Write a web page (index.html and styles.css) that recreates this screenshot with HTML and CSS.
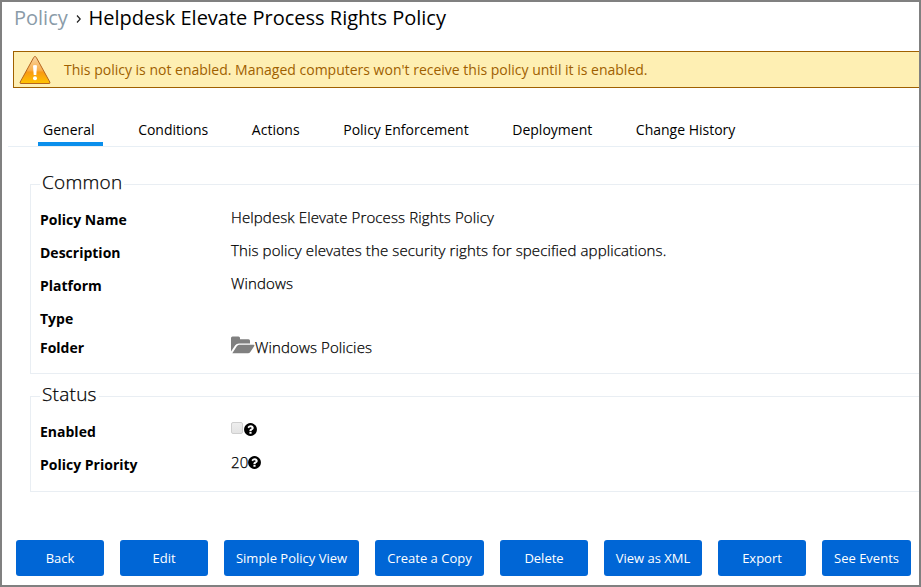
FILE: index.html
```html
<!DOCTYPE html>
<html lang="en">
<head>
<meta charset="utf-8">
<title>Helpdesk Elevate Process Rights Policy</title>
<link rel="stylesheet" href="styles.css">
</head>
<body>
<main class="page">
  <h1 class="title"><span class="crumb">Policy</span><svg class="chevron" width="6" height="8" viewBox="0 0 6 8"><path d="M1 .5 4.200 4 1 7.500" fill="none" stroke="#222" stroke-width="1.200"/></svg><span class="current">Helpdesk Elevate Process Rights Policy</span></h1>
  <div class="alert">
    <svg class="warning" width="32" height="30" viewBox="0 0 32 30">
      <defs><linearGradient id="amber" x1="0" y1="0" x2="0" y2="1"><stop offset="0" stop-color="#f8d5a4"/><stop offset=".5" stop-color="#f9b04e"/><stop offset=".58" stop-color="#f99a12"/><stop offset="1" stop-color="#ffc400"/></linearGradient></defs>
      <path d="M16 1.500Q16.800 1.500 17.300 2.500L30.800 27Q31.500 28.500 30 28.500H2Q.5 28.500 1.200 27L14.700 2.500Q15.200 1.500 16 1.500Z" fill="url(#amber)" stroke="#b5651d"/>
      <path d="M14 10.500Q16 9.500 18 10.500L17.300 20H14.700Z" fill="#fff"/><circle cx="16" cy="23.300" r="2" fill="#fff"/>
    </svg>
    <span class="alert-text">This policy is not enabled. Managed computers won't receive this policy until it is enabled.</span>
  </div>
  <nav class="tabs">
    <a class="tab active">General</a>
    <a class="tab">Conditions</a>
    <a class="tab">Actions</a>
    <a class="tab">Policy Enforcement</a>
    <a class="tab">Deployment</a>
    <a class="tab">Change History</a>
  </nav>
  <section class="panel common">
    <h2 class="legend">Common</h2>
    <dl class="fields">
      <dt>Policy Name</dt><dd>Helpdesk Elevate Process Rights Policy</dd>
      <dt>Description</dt><dd>This policy elevates the security rights for specified applications.</dd>
      <dt>Platform</dt><dd>Windows</dd>
      <dt>Type</dt><dd></dd>
      <dt>Folder</dt><dd class="folder-value"><svg class="folder" width="24" height="18" viewBox="0 0 24 18"><path d="M0 16V2Q0 .5 1.500.5H7.500Q9 .5 9 2V3.300H17.500Q19 3.300 19 4.800V7.500H8Q5.500 7.500 4.200 9.300L0 15.500Z" fill="#808080"/><path d="M1.300 17.200 5.800 10.200Q6.700 8.700 8.300 8.700H22.500Q24 8.700 23.300 10L19.300 16Q18.500 17.300 17 17.300Z" fill="#808080"/></svg>Windows Policies</dd>
    </dl>
  </section>
  <section class="panel status">
    <h2 class="legend">Status</h2>
    <dl class="fields">
      <dt>Enabled</dt><dd class="enabled-value"><span class="checkbox"></span><svg class="help" width="15" height="15" viewBox="0 0 1792 1792"><use href="#help"/></svg></dd>
      <dt>Policy Priority</dt><dd class="priority-value">20<svg class="help" width="15" height="15" viewBox="0 0 1792 1792"><path id="help" d="M1024 1376v-192q0-14-9-23t-23-9h-192q-14 0-23 9t-9 23v192q0 14 9 23t23 9h192q14 0 23-9t9-23zm256-672q0-88-55.500-163t-138.500-116-170.500-41q-243 0-371 213-15 24 8 42l132 100q7 6 19 6 16 0 25-12 53-68 86-92 34-24 86-24 48 0 85.500 26t37.500 59q0 38-20 61t-68 45q-63 28-115.500 86.500t-52.500 125.500v36q0 14 9 23t23 9h192q14 0 23-9t9-23q0-19 21.500-49.500t54.500-49.500q32-18 49-28.500t46-35 44.500-48 28-60.500 12.500-81zm384 192q0 209-103 385.500t-279.500 279.500-385.500 103-385.500-103-279.500-279.500-103-385.500 103-385.500 279.500-279.500 385.500-103 385.500 103 279.500 279.500 103 385.500z"/></svg></dd>
    </dl>
  </section>
  <div class="actions">
    <button class="btn">Back</button>
    <button class="btn">Edit</button>
    <button class="btn simple">Simple Policy View</button>
    <button class="btn copy">Create a Copy</button>
    <button class="btn">Delete</button>
    <button class="btn xml">View as XML</button>
    <button class="btn">Export</button>
    <button class="btn events">See Events</button>
  </div>
</main>
</body>
</html>
```
FILE: styles.css
```css
* { box-sizing: border-box; }
body { margin: 0; font: 14px/20px "Open Sans", sans-serif; color: #000; }
.page { width: 921px; height: 587px; border: 2px solid #808080; background: #fff; overflow: hidden; display: flex; flex-direction: column; }
.title { margin: 0 0 0 12px; height: 49px; display: flex; font-size: 20px; line-height: 32px; font-weight: 400; white-space: nowrap; flex: none; }
.crumb { width: 61.5px; color: #8a9ba8; }
.chevron { margin: 13px 7px 0 0; }
.alert { flex: none; height: 37px; margin-left: 11px; border: 1px solid #9f6000; border-right: 0; background: #feefb3; color: #9f6000; display: flex; align-items: center; padding-left: 5px; }
.alert-text { margin-left: 13px; white-space: nowrap; }
.tabs { flex: none; display: flex; height: 31px; margin: 28px 0 0 6px; padding-left: 30px; border-bottom: 1px solid #e8eff5; gap: 30px; }
.tab { height: 30px; padding: 4px 8.600px 0 5px; line-height: 20px; white-space: nowrap; }
.tab.active { border-bottom: 4px solid #0a8fec; }
.panel { flex: none; margin-left: 28px; border: 1px solid #e9eef3; border-right: 0; }
.common { height: 190px; margin-top: 37px; }
.status { height: 96px; margin-top: 22px; }
.legend { width: max-content; margin: -17px 0 0 9px; padding: 0 2px; background: #fff; font-size: 19px; line-height: 28px; font-weight: 300; letter-spacing: 0.250px; -webkit-text-stroke: 0.250px #000; }
.fields { margin: 9px 0 0 9px; display: grid; grid-template-columns: 191px 1fr; grid-auto-rows: 33px; }
.common .fields { grid-template-rows: 33px 33px 33px 29px 33px; }
dt { font-weight: 700; padding-top: 5px; }
dd { margin: 0; padding-top: 2px; display: flex; white-space: nowrap; font-size: 15px; font-weight: 300; letter-spacing: 0.120px; -webkit-text-stroke: 0.250px #000; }
.folder-value { padding-top: 4px; }
.folder { margin-top: -1px; }
.checkbox { width: 12px; height: 12px; margin: 3px 0 0 0; border: 1px solid #cfcfcf; border-radius: 2px; background: linear-gradient(#eee, #e4e4e4); }
.help { margin-top: 3px; }
.priority-value .help { margin-left: -1px; }
.actions { flex: none; display: flex; gap: 16px; margin: 48px 0 0 14px; }
.btn { width: 88px; height: 36px; padding: 0; border: 0; border-radius: 3px; background: #0066d6; color: #fff; font: 13px "Open Sans", sans-serif; white-space: nowrap; flex: none; }
.simple { width: 135px; }
.copy { width: 109px; }
.xml { width: 98px; }
.events { width: 89px; }
```
